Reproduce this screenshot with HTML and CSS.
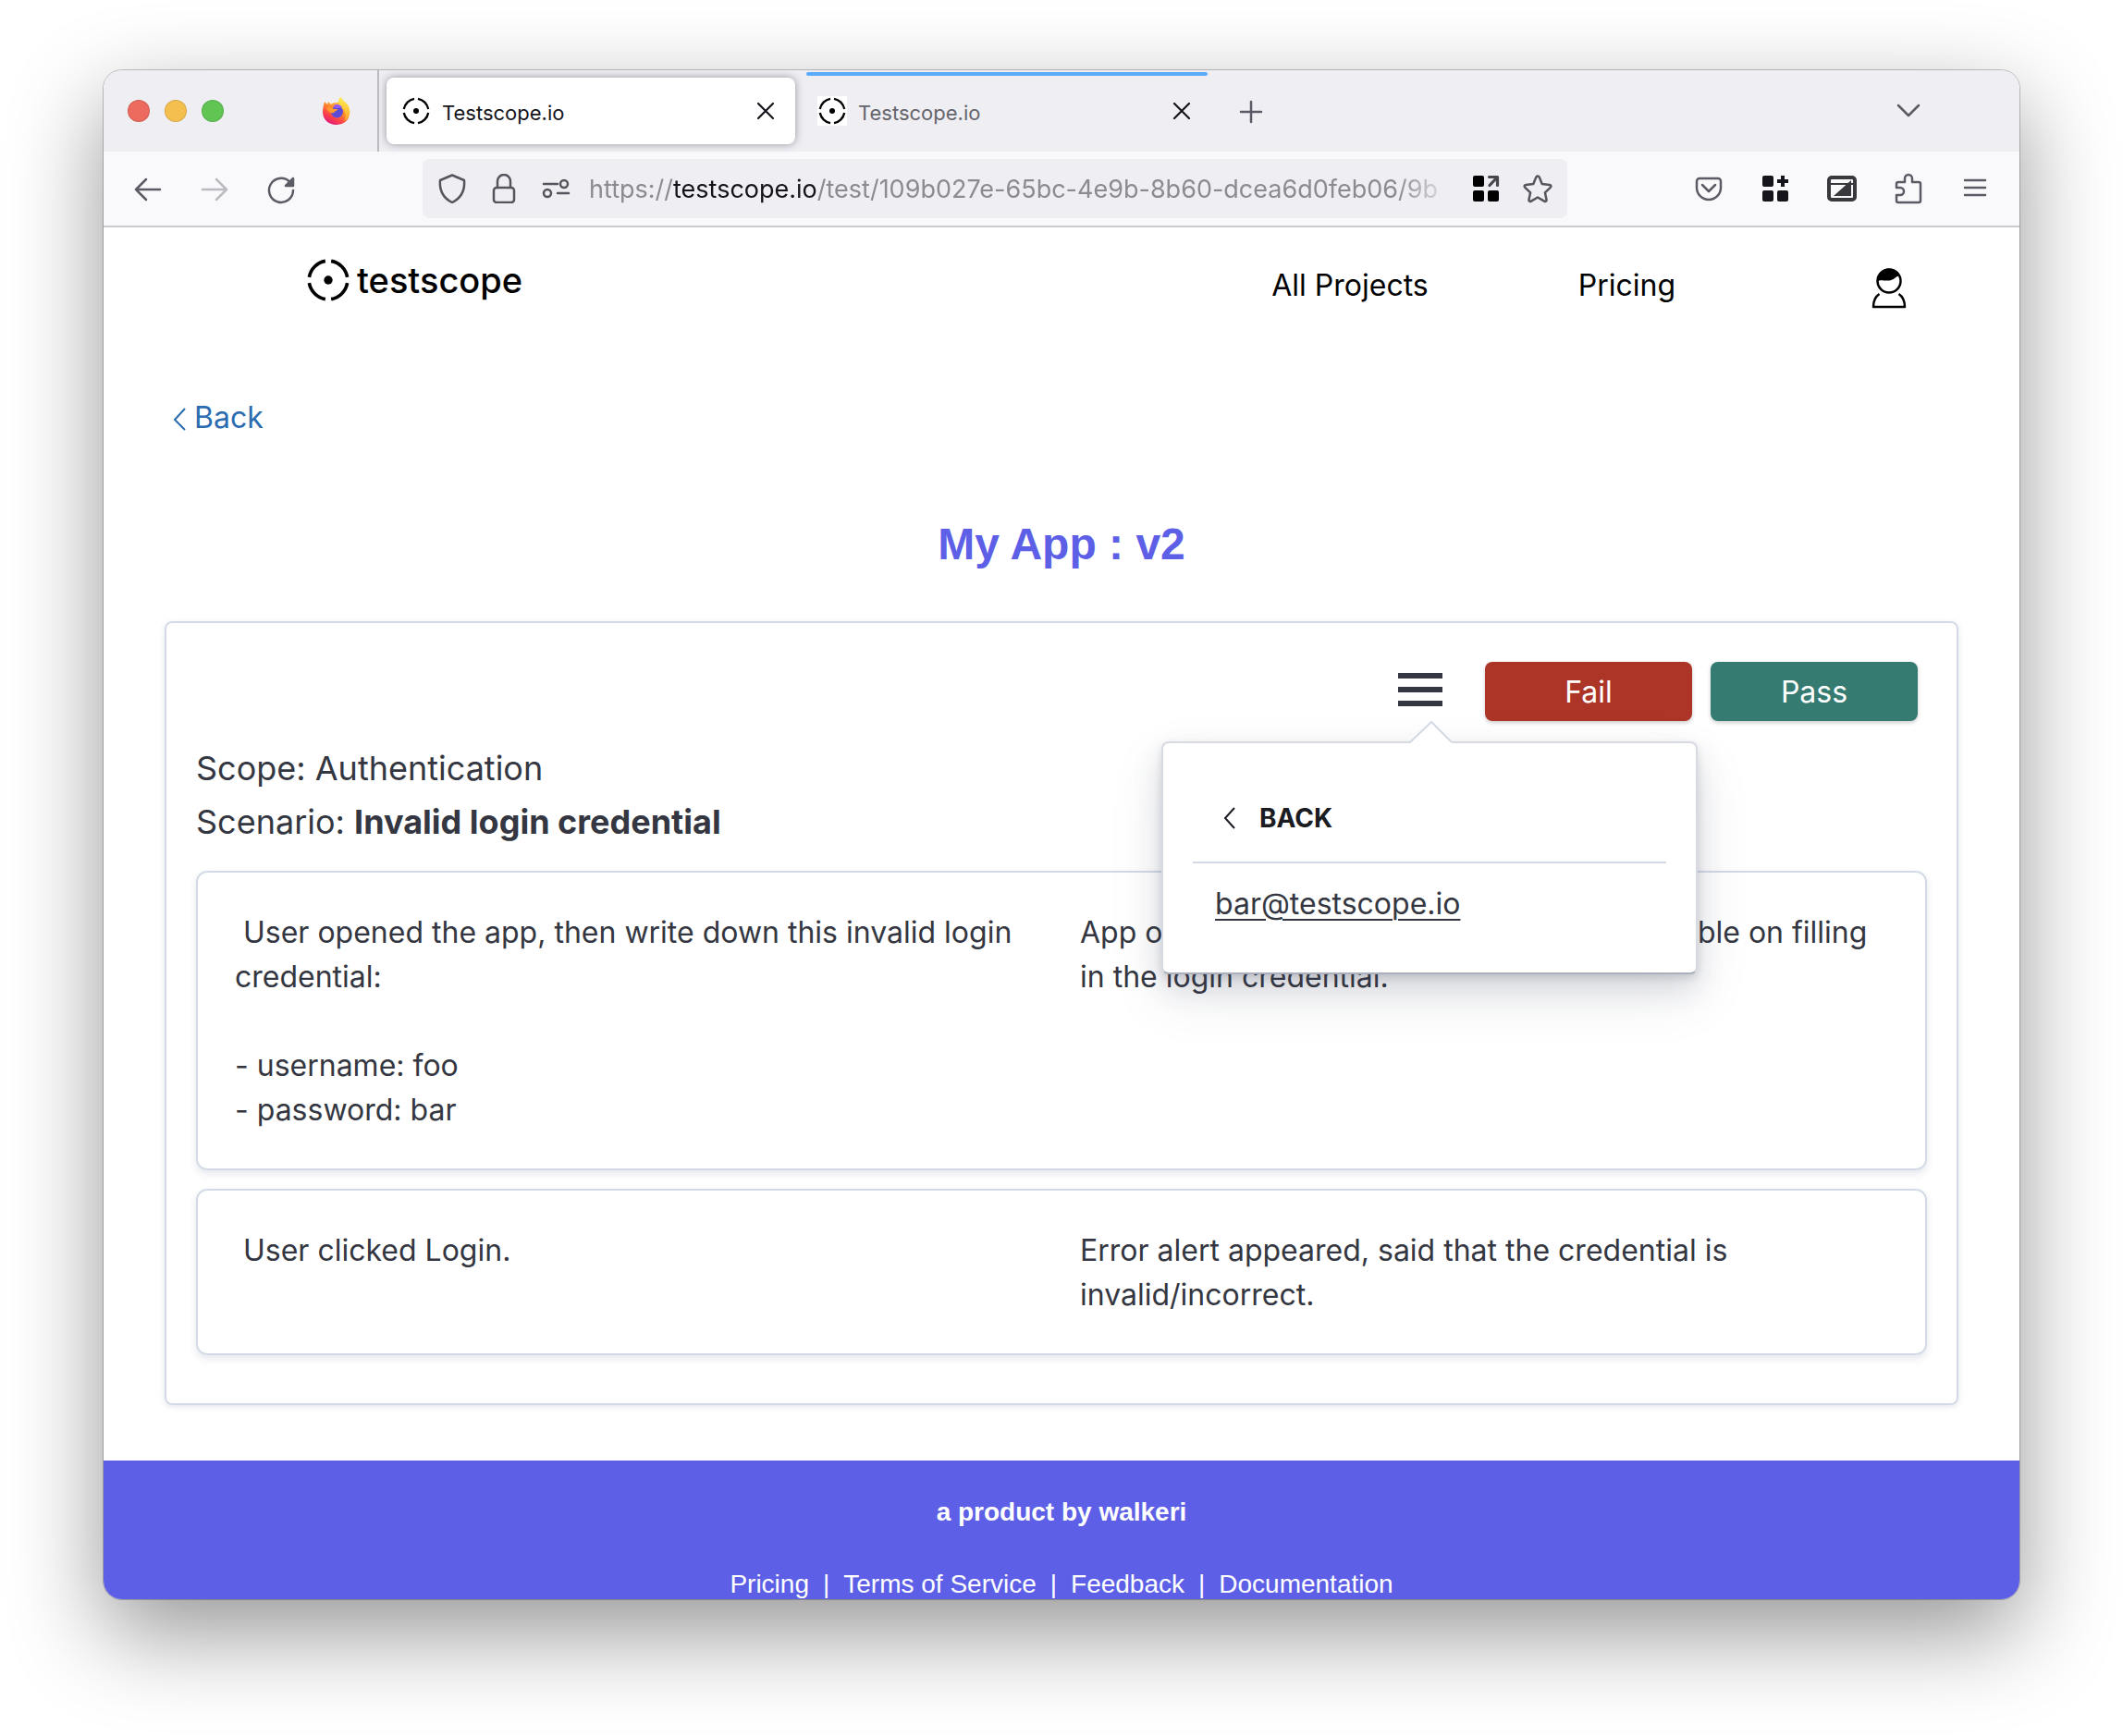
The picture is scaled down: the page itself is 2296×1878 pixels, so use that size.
FILE: index.html
```html
<!DOCTYPE html>
<html lang="en">
<head>
<meta charset="utf-8">
<title>Testscope.io</title>
<link rel="stylesheet" href="styles.css">
</head>
<body>
<svg class="defs" aria-hidden="true">
  <symbol id="scope" viewBox="0 0 48 48">
    <path d="M27 4.2A20.500 21 0 0 1 43.800 21M43.800 27A20.500 21 0 0 1 27 43.800M21 43.800A20.500 21 0 0 1 4.200 27M4.200 21A20.500 21 0 0 1 21 4.200" fill="none" stroke="#000" stroke-width="3.500"/>
    <circle cx="24" cy="24" r="4.500"/>
  </symbol>
  <symbol id="close" viewBox="0 0 24 24"><path d="M4 4l16 16M20 4L4 20" fill="none" stroke="currentColor" stroke-width="2.200" stroke-linecap="round"/></symbol>
</svg>
<div class="window">
  <div class="titlebar">
    <div class="controls">
      <button class="light close" aria-label="Close window"></button>
      <button class="light minimize" aria-label="Minimize window"></button>
      <button class="light zoom" aria-label="Zoom window"></button>
      <svg class="firefox" viewBox="0 0 32 32" aria-hidden="true">
        <defs>
          <linearGradient id="fox" x1=".8" y1=".1" x2=".3" y2="1"><stop offset="0" stop-color="#ffe14a"/><stop offset=".45" stop-color="#ff8a2a"/><stop offset=".75" stop-color="#fb3f4c"/><stop offset="1" stop-color="#e0187c"/></linearGradient>
          <linearGradient id="tail" x1=".5" y1="0" x2=".5" y2="1"><stop offset="0" stop-color="#fff04f"/><stop offset="1" stop-color="#ffa62b"/></linearGradient>
        </defs>
        <path d="M3 6l3 3 1-3 3 3c2-2 4-2 7-2 2-2 2-4 4-6 1 4 5 5 7 9 5 9 1 21-12 21C6 31 1 24 1 17c0-4 1-7 2-11z" fill="url(#fox)"/>
        <path d="M20 0.500c1 4 6 6 8.500 9.500 4 8 1 14-4 17 2-6 2-11-3-15-4-3-4-7-1.500-11.500z" fill="url(#tail)"/>
        <circle cx="16.500" cy="17" r="6.500" fill="#5b4bd6"/>
        <path d="M13 10c3-2 7-1 9 2l-3 1-5 0z" fill="#9059ff"/>
        <path d="M5 13c3-2 6-1 8 1h4c0 2-3 2-4 4-3 1-6-1-8-5z" fill="#ff9a2e"/>
      </svg>
    </div>
    <div class="tab tab-active">
      <svg class="favicon" aria-hidden="true"><use href="#scope"/></svg>
      <span class="tab-title">Testscope.io</span>
      <button class="tab-close" aria-label="Close tab"><svg width="24" height="24"><use href="#close"/></svg></button>
    </div>
    <div class="tab tab-idle">
      <svg class="favicon" aria-hidden="true"><use href="#scope"/></svg>
      <span class="tab-title">Testscope.io</span>
      <button class="tab-close" aria-label="Close tab"><svg width="24" height="24"><use href="#close"/></svg></button>
    </div>
    <button class="tool new-tab" aria-label="New tab"><svg viewBox="0 0 40 40"><path d="M20 10v22M9 21h22"/></svg></button>
    <button class="tool list-tabs" aria-label="List all tabs"><svg viewBox="0 0 40 40"><path d="M9 14l11 11 11-11"/></svg></button>
  </div>

  <div class="toolbar">
    <button class="tool" aria-label="Go back"><svg viewBox="0 0 40 40"><path d="M33 21H7M18 10L7 21l11 11"/></svg></button>
    <button class="tool tool-off" aria-label="Go forward"><svg viewBox="0 0 40 40"><path d="M7 21h26M22 10l11 11-11 11"/></svg></button>
    <button class="tool" aria-label="Reload"><svg viewBox="0 0 40 40"><path d="M33 22a13 13 0 1 1-4-9.500"/><path class="solid" d="M33 9v8h-8z"/></svg></button>
    <div class="urlbar">
      <svg class="url-icon" viewBox="0 0 32 32"><path d="M16 1.500L29 7c1 11-3 19-13 24C6 26 2 18 3 7z"/></svg>
      <svg class="url-icon" viewBox="0 0 32 32"><path d="M9 15V8a7 7 0 0 1 14 0v7"/><rect x="5" y="15" width="22" height="16" rx="3"/></svg>
      <svg class="url-icon" viewBox="0 0 32 32"><path d="M3 11h15M18 21h12"/><circle cx="25" cy="11" r="4"/><circle cx="7" cy="21" r="4"/></svg>
      <div class="url" role="textbox" aria-label="Address">https://<span class="host">testscope.io</span>/test/109b027e-65bc-4e9b-8b60-dcea6d0feb06/9b</div>
      <svg class="url-icon" viewBox="0 0 32 32"><g fill="#000" stroke="none"><rect x="2" y="2" width="12" height="12" rx="2"/><rect x="2" y="18" width="12" height="12" rx="2"/><rect x="18" y="18" width="12" height="12" rx="2"/></g><path d="M20 12.500L28 4M19.500 3.500H28.500V12.500" stroke="#47474e" stroke-width="3.200"/></svg>
      <svg class="url-icon" viewBox="0 0 32 32"><path d="M16 2.500c.8 0 1.400.400 1.700 1.100l3 7.400 8 .9c1.600.2 2.200 1.800 1 2.900l-5.800 5.500 1.600 7.700c.3 1.500-1.100 2.400-2.400 1.600L16 25.500l-7.100 4.100c-1.300.8-2.700-.1-2.400-1.600l1.600-7.700-5.800-5.500c-1.200-1.100-.6-2.700 1-2.900l8-.9 3-7.400c.3-.7.900-1.100 1.700-1.100z"/></svg>
    </div>
    <button class="tool" aria-label="Save to Pocket"><svg viewBox="0 0 40 40"><path d="M10 9h20a3 3 0 0 1 3 3v7a13 13 0 0 1-26 0v-7a3 3 0 0 1 3-3zM13 16l7 7 7-7"/></svg></button>
    <button class="tool" aria-label="Containers"><svg viewBox="0 0 40 40"><g fill="#15141a" stroke="none"><rect x="6" y="6" width="12" height="12" rx="2"/><rect x="6" y="22" width="12" height="12" rx="2"/><rect x="22" y="22" width="12" height="12" rx="2"/><path d="M26 6h4v4h4v4h-4v4h-4v-4h-4v-4h4z"/></g></svg></button>
    <button class="tool" aria-label="Window resizer"><svg viewBox="0 0 40 40"><g fill="#38383d"><rect x="6" y="8" width="28" height="24" rx="3" fill="none" stroke="#38383d" stroke-width="4"/><rect x="8" y="14" width="24" height="2"/><path d="M11 28L30 11v17z"/></g></svg></button>
    <button class="tool" aria-label="Extensions"><svg viewBox="0 0 40 40"><path d="M9 13h7V9a4 4 0 0 1 8 0v4h7a2 2 0 0 1 2 2v18a2 2 0 0 1-2 2H9a2 2 0 0 1-2-2v-6h4a4 4 0 0 0 0-8H7v-4a2 2 0 0 1 2-2z"/></svg></button>
    <button class="tool" aria-label="Open menu"><svg viewBox="0 0 40 40"><path d="M9 11h22M9 19h22M9 27h22"/></svg></button>
  </div>

  <header class="site-header">
    <a class="brand" href="#"><svg class="brand-mark" aria-hidden="true"><use href="#scope"/></svg>testscope</a>
    <nav class="site-nav">
      <a href="#">All Projects</a>
      <a href="#">Pricing</a>
      <a class="account" href="#" aria-label="Account"><svg viewBox="0 0 40 48"><circle cx="20" cy="17" r="12.500" fill="none" stroke="#000" stroke-width="2.500"/><path d="M8 17C7 9 13 3.500 20 3.500c6 0 10 3 12 8-5-1-5 5-14 5-5 0-7-1-10 .500z"/><path d="M9.500 31C5 34 3 39 3 45h34c0-6-2-11-6.500-14" fill="none" stroke="#000" stroke-width="2.500" stroke-linejoin="round"/></svg></a>
    </nav>
  </header>

  <main class="content">
    <a class="back-link" href="#"><svg viewBox="0 0 16 28"><path d="M14 4L3 16l11 11"/></svg>Back</a>
    <h1 class="title">My App : v2</h1>
    <section class="card">
      <div class="actions">
        <div class="menu">
          <button class="menu-toggle" aria-label="Menu"><span></span><span></span><span></span></button>
          <div class="popover">
            <svg class="arrow" viewBox="0 0 48 24"><path d="M0 24L23 1l23 23z" fill="#fff"/><path d="M0 23L23 1l22 22" fill="none" stroke="#d3dae6" stroke-width="2"/></svg>
            <button class="popover-back"><svg viewBox="0 0 16 28"><path d="M13 3L3 14l10 11"/></svg>BACK</button>
            <a class="email" href="#">bar@testscope.io</a>
          </div>
        </div>
        <button class="btn btn-fail">Fail</button>
        <button class="btn btn-pass">Pass</button>
      </div>
      <div class="scenario">
        <p>Scope: Authentication</p>
        <p>Scenario: <strong>Invalid login credential</strong></p>
      </div>
      <div class="steps">
        <article class="step">
          <p> User opened the app, then write down this invalid login credential:

- username: foo
- password: bar</p>
          <p>App opened the login page and the user is able on filling in the login credential.</p>
        </article>
        <article class="step">
          <p> User clicked Login.</p>
          <p>Error alert appeared, said that the credential is invalid/incorrect.</p>
        </article>
      </div>
    </section>
  </main>

  <footer class="site-footer">
    <strong>a product by walkeri</strong>
    <div class="footer-links"><a href="#">Pricing</a><span>|</span><a href="#">Terms of Service</a><span>|</span><a href="#">Feedback</a><span>|</span><a href="#">Documentation</a></div>
  </footer>
</div>
</body>
</html>
```
FILE: styles.css
```css
* { box-sizing: border-box; }

body {
  margin: 0;
  padding: 76px 112px 148px;
  background: #fff;
  font-family: Inter, "Liberation Sans", sans-serif;
  font-size: 32px;
  line-height: 48px;
  color: #343741;
}

a { color: inherit; text-decoration: none; }
p, h1 { margin: 0; }
svg { display: block; }

button {
  border: 0;
  padding: 0;
  background: none;
  font: inherit;
  color: inherit;
}

.defs { position: absolute; width: 0; height: 0; }

.window {
  overflow: hidden;
  border-radius: 20px;
  background: #fff;
  box-shadow: 0 0 0 1px rgba(0, 0, 0, .22), 0 36px 100px rgba(0, 0, 0, .42);
}

/* Tab strip */
.titlebar {
  display: flex;
  align-items: center;
  height: 88px;
  padding-right: 100px;
  background: #efeef3;
}

.controls {
  display: flex;
  align-items: center;
  gap: 16px;
  width: 298px;
  height: 88px;
  padding-left: 26px;
  border-right: 2px solid #bcbcc0;
}

.light { width: 24px; height: 24px; border-radius: 50%; border: 1px solid rgba(0, 0, 0, .12); }
.close { background: #ec6a5e; }
.minimize { background: #f4bf4f; }
.zoom { background: #61c554; }
.firefox { width: 32px; height: 32px; margin-left: 90px; }

.tab {
  position: relative;
  display: flex;
  align-items: center;
  gap: 12px;
  width: 442px;
  height: 72px;
  margin-left: 8px;
  padding: 0 20px 0 16px;
  border-radius: 8px;
  font-size: 22px;
  line-height: 32px;
  color: #15141a;
}

.tab-active { background: #fff; box-shadow: 0 0 8px rgba(60, 60, 70, .5); }
.tab-idle .tab-title { color: #65656c; }
.tab-idle .favicon { background: #fff; }

.tab-idle::before {
  content: "";
  position: absolute;
  top: -6px;
  left: 4px;
  right: 4px;
  height: 4px;
  border-radius: 2px;
  background: #5aabfa;
}

.favicon { width: 32px; height: 32px; }
.tab-title { flex: 1; padding-top: 3px; }

.tool { width: 40px; height: 40px; color: #5b5b66; }
.tool svg { width: 40px; height: 40px; }
.tool > svg > path { fill: none; stroke: currentColor; stroke-width: 2.5; stroke-linecap: round; stroke-linejoin: round; }
.tool > svg > .solid { fill: currentColor; }
.tool-off { color: #bbbbc2; }
.new-tab { margin-left: 23px; }
.list-tabs { margin-left: auto; }

/* Navigation bar */
.toolbar {
  display: flex;
  align-items: center;
  gap: 32px;
  height: 82px;
  padding: 0 28px;
  background: #f9f9fb;
  border-bottom: 2px solid #ccccce;
}

.urlbar {
  flex: 1;
  min-width: 0;
  display: flex;
  align-items: center;
  gap: 20px;
  height: 64px;
  margin: 0 101px;
  padding: 0 16px;
  border-radius: 8px;
  background: #efeef3;
}

.url-icon { flex: none; width: 32px; height: 32px; fill: none; stroke: #55555e; stroke-width: 2.5; stroke-linejoin: round; stroke-linecap: round; }
.url-icon + .url-icon { margin-left: 4px; }

.url {
  flex: 1;
  min-width: 0;
  overflow: hidden;
  padding-top: 2px;
  white-space: nowrap;
  font-size: 27px;
  color: #8b8b90;
  mask-image: linear-gradient(to left, transparent, #000 60px);
}

.host { color: #15141a; }

/* Site header */
.site-header {
  display: flex;
  align-items: center;
  justify-content: space-between;
  height: 114px;
  padding: 0 72px 0 218px;
  color: #000;
}

.brand { display: flex; align-items: center; gap: 6px; font-size: 38px; font-weight: 500; }
.brand-mark { width: 50px; height: 50px; }
.site-nav { display: flex; align-items: center; gap: 162px; padding-top: 12px; }
.account { width: 138px; }
.account svg { width: 40px; height: 48px; margin: 4px auto 0; }

/* Content */
.content { padding: 68px 66px 60px; }

.back-link { display: flex; align-items: center; gap: 8px; padding-left: 8px; color: #2b6cb0; }
.back-link svg { width: 16px; height: 28px; fill: none; stroke: currentColor; stroke-width: 2; }

.title {
  margin: 85px 0 55px;
  font-family: "Liberation Sans", sans-serif;
  font-size: 48px;
  line-height: 56px;
  text-align: center;
  color: #5d5fe6;
}

.card {
  padding: 42px 32px 52px;
  border: 2px solid #d3dae6;
  border-radius: 8px;
  box-shadow: 0 2px 6px rgba(50, 60, 100, .12);
}

.actions { display: flex; justify-content: flex-end; gap: 20px; padding-right: 10px; }

.menu { position: relative; margin-right: 26px; }
.menu-toggle { display: flex; flex-direction: column; gap: 9px; width: 48px; padding-top: 12px; }
.menu-toggle span { width: 48px; height: 6px; background: #343741; }

.btn {
  width: 224px;
  height: 64px;
  padding-top: 2px;
  border-radius: 8px;
  color: #fff;
  box-shadow: 0 2px 4px rgba(0, 0, 0, .2);
}

.btn-fail { background: #ad3527; }
.btn-pass { background: #357b72; }

.popover {
  position: absolute;
  top: 86px;
  left: -256px;
  z-index: 1;
  width: 580px;
  padding: 36px 32px 50px;
  border: 2px solid #d8dae2;
  border-bottom-color: #abb0bd;
  border-radius: 8px;
  background: #fff;
  box-shadow: 0 4px 8px rgba(60, 65, 90, .16), 0 16px 32px rgba(60, 65, 90, .14), 0 24px 60px rgba(60, 65, 90, .1);
}

.arrow { position: absolute; top: -24px; left: 267px; width: 48px; height: 24px; }

.popover-back {
  display: flex;
  align-items: center;
  gap: 24px;
  width: 100%;
  height: 94px;
  padding: 0 0 2px 32px;
  border-bottom: 2px solid #d3dae6;
  font-size: 28px;
  font-weight: 700;
  color: #1a1c21;
}

.popover-back svg { width: 16px; height: 28px; fill: none; stroke: currentColor; stroke-width: 2; }

.email {
  display: inline-block;
  margin: 20px 0 0 24px;
  text-decoration: underline;
  text-decoration-thickness: 2px;
  text-underline-offset: 5px;
}

.scenario { margin: 22px 0 24px; font-size: 36px; line-height: 58px; }

.steps { display: grid; gap: 20px; }

.step {
  display: grid;
  grid-template-columns: 1fr 1fr;
  gap: 40px;
  padding: 41px 40px 39px;
  border: 2px solid #d3dae6;
  border-radius: 12px;
  box-shadow: 0 4px 8px rgba(50, 60, 100, .12);
  white-space: pre-wrap;
}

/* Footer */
.site-footer {
  padding-top: 40px;
  background: #5d5fe6;
  font-family: "Liberation Sans", sans-serif;
  font-size: 28px;
  line-height: 32px;
  text-align: center;
  color: #fff;
}

.footer-links { display: flex; justify-content: center; gap: 15px; margin-top: 46px; }
```
